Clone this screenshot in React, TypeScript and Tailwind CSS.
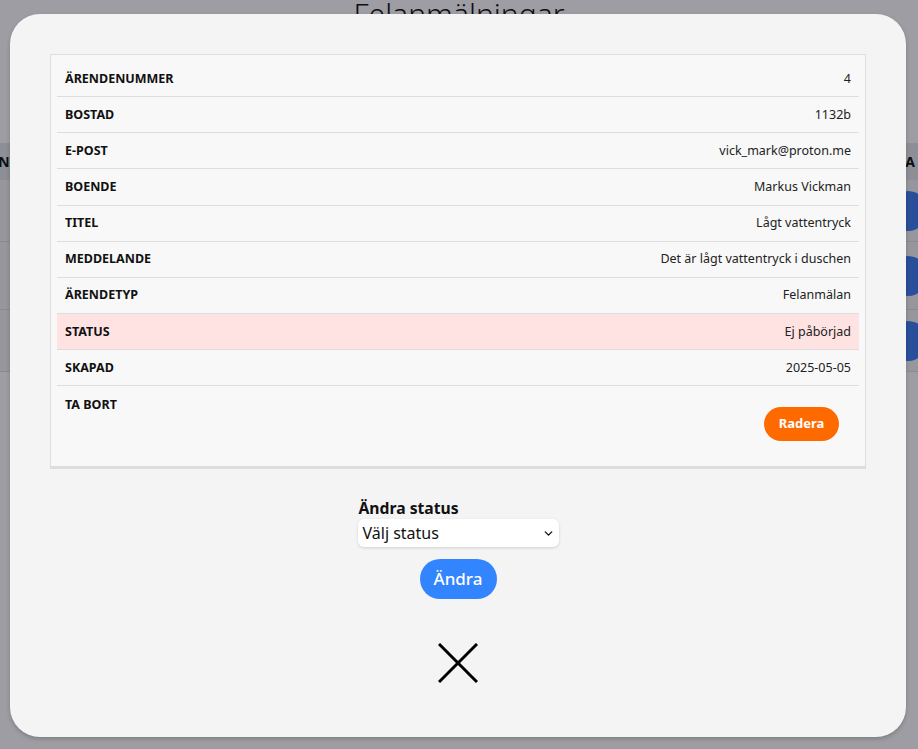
import { ChevronDown } from "lucide-react";

const rows = [
  { label: "ÄRENDENUMMER", value: "4" },
  { label: "BOSTAD", value: "1132b" },
  { label: "E-POST", value: "vick_mark@proton.me" },
  { label: "BOENDE", value: "Markus Vickman" },
  { label: "TITEL", value: "Lågt vattentryck" },
  { label: "MEDDELANDE", value: "Det är lågt vattentryck i duschen" },
  { label: "ÄRENDETYP", value: "Felanmälan" },
  { label: "STATUS", value: "Ej påbörjad", highlight: true },
  { label: "SKAPAD", value: "2025-05-05" },
];

function BackgroundPage() {
  return (
    <div className="min-h-[749px] bg-white font-['Noto_Sans',sans-serif] text-black">
      <h1 className="-mt-[6px] text-center text-[30px] leading-[40px] font-light">Felanmälningar</h1>
      <div className="mt-[109px]">
        <div className="flex h-[37px] items-center justify-between bg-[#e2e6e8] text-[14px] font-bold">
          <span className="-ml-[30px]">BOENDE</span>
          <span className="mr-[3px]">ÅTGÄRDA</span>
        </div>
        {[62, 68, 62].map((h, i) => (
          <div key={i} className="flex items-center justify-end border-b border-[#ddd] bg-[#f2f2f2]" style={{ height: h }}>
            <div className="-mr-[10px] h-[40px] w-[40px] rounded-full bg-[#2f75f0]" />
          </div>
        ))}
      </div>
    </div>
  );
}

export default function App() {
  return (
    <div className="relative h-[749px] w-[918px] overflow-hidden">
      <BackgroundPage />
      <div className="absolute inset-0 bg-[rgba(35,32,46,0.44)]" />
      <div className="absolute left-[10px] top-[14px] flex h-[723px] w-[896px] flex-col rounded-[30px] bg-[#f4f4f4] px-[40px] pt-[40px] font-['Noto_Sans',sans-serif] text-[#111] shadow-[0_2px_4px_rgba(0,0,0,0.2)]">
        <div className="border border-[#dddddd] border-b-[3px] bg-[#f8f8f8] p-[6px]">
          {rows.map((r) => (
            <div
              key={r.label}
              className={`flex h-[36.125px] items-center justify-between border-b border-[#dddddd] px-2 pt-px text-[12.5px] ${r.highlight ? "bg-[#ffe3e3]" : ""}`}
            >
              <span className="font-bold text-[#111]">{r.label}</span>
              <span className="text-[#222]">{r.value}</span>
            </div>
          ))}
          <div className="flex items-start justify-between px-2 text-[12.5px]">
            <span className="pt-[10px] font-bold leading-[18px]">TA BORT</span>
            <div className="pt-[21px] pb-[19px] pr-[12px]">
              <button className="h-[34px] w-[75px] rounded-full bg-[#ff6a00] text-[13px] font-bold text-white">Radera</button>
            </div>
          </div>
        </div>

        <div className="mx-auto mt-[29px] flex w-[201px] flex-col">
          <label className="ml-[1px] text-[15.7px] font-bold leading-[20px]">Ändra status</label>
          <div className="mt-[1px] flex h-[28px] items-center justify-between rounded-md bg-white pl-[5px] pr-[4px] text-[16px] shadow-[0_1px_3px_rgba(0,0,0,0.15)]">
            <span>Välj status</span>
            <ChevronDown size={13} strokeWidth={2.5} />
          </div>
        </div>
        <button className="mx-auto mt-[12px] h-[40px] w-[77px] rounded-full bg-[#3385ff] text-[17px] font-medium text-white">Ändra</button>

        <svg className="mx-auto mt-[44px]" width="40" height="40" viewBox="0 0 40 40">
          <line x1="1" y1="1" x2="39" y2="39" stroke="#000" strokeWidth="3" />
          <line x1="39" y1="1" x2="1" y2="39" stroke="#000" strokeWidth="3" />
        </svg>
      </div>
    </div>
  );
}
